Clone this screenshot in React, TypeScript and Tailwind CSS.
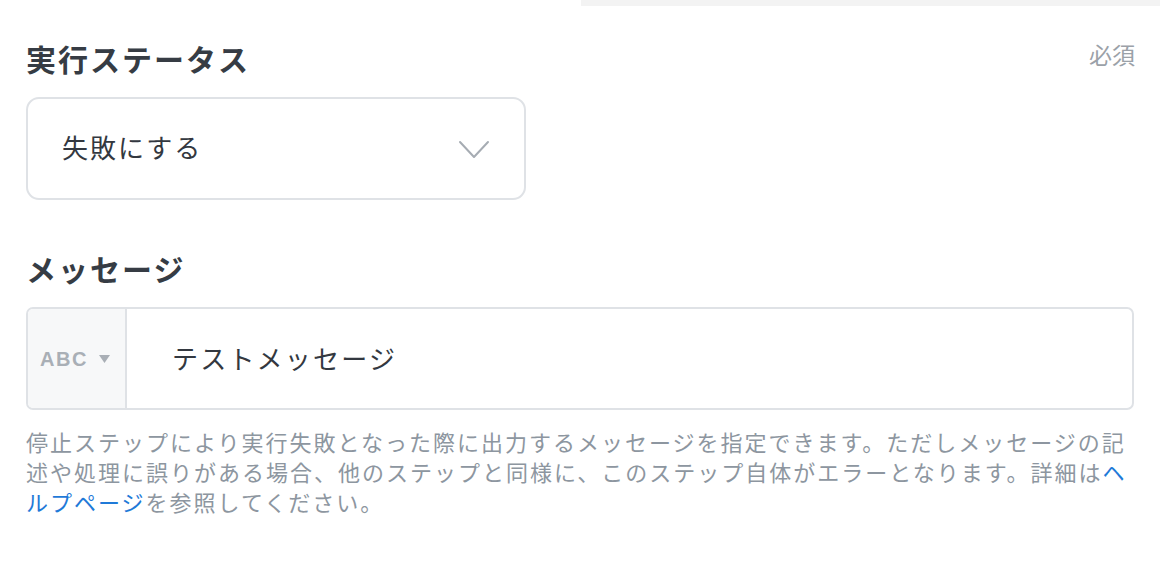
import React from 'react';

const jp = { fontFamily: '"Noto Sans CJK JP", "Noto Sans", sans-serif' };

const Chevron = () => (
    <svg width="32" height="20" viewBox="0 0 32 20" fill="none">
        <polyline points="2,3 16,18 30,3" stroke="#a6acb3" strokeWidth="2" strokeLinecap="round" strokeLinejoin="round" />
    </svg>
);

const Caret = () => (
    <svg width="11" height="8" viewBox="0 0 11 8">
        <polygon points="0,0 11,0 5.5,8" fill="#a9afb6" />
    </svg>
);

export default function App() {
    return (
        <div className="w-[1160px] h-[578px] bg-white overflow-hidden" style={jp}>
            {/* strip of the panel above */}
            <div className="flex justify-end">
                <div className="w-[579px] h-[6px] bg-[#f3f3f3]"></div>
            </div>

            <div className="px-[26px]">
                {/* 実行ステータス */}
                <div className="flex justify-between items-center mt-[32px] h-[40px]">
                    <h2 className="text-[30px] font-bold tracking-[2px] text-[#363c44] leading-[40px]">実行ステータス</h2>
                    <span className="text-[23px] text-[#9ba1a8] leading-[30px] mr-[-1px] -mt-[8px]">必須</span>
                </div>
                <div className="mt-[19px] w-[500px] h-[103px] border-2 border-[#dfe2e6] rounded-[13px] flex items-center justify-between pl-[34px] pr-[34px]">
                    <span className="text-[26px] tracking-[2px] text-[#333840] mb-[5px]">失敗にする</span>
                    <Chevron />
                </div>

                {/* メッセージ */}
                <h2 className="mt-[48px] text-[30px] font-bold tracking-[2px] text-[#363c44] leading-[40px]">メッセージ</h2>
                <div className="mt-[19px] h-[103px] border-2 border-[#dfe2e6] rounded-[7px] flex overflow-hidden">
                    <div className="w-[99px] bg-[#f7f8f9] border-r-2 border-[#dfe2e6] flex items-center gap-[11px] pl-[12px]">
                        <span className="text-[20px] font-bold tracking-[1.5px] text-[#a9afb6]" style={{ fontFamily: '"Liberation Sans", Arial, sans-serif' }}>ABC</span>
                        <Caret />
                    </div>
                    <div className="flex items-center pl-[45px]">
                        <span className="text-[26px] tracking-[2.2px] text-[#333840] mb-[3px]">テストメッセージ</span>
                    </div>
                </div>

                <p className="mt-[16px] text-[22px] leading-[30px] tracking-[2px] text-[#8d96a0]">
                    <span>停止ステップにより実行失敗となった際に出力するメッセージを指定できます。ただしメッセージの記述や処理に誤りがある場合、他のステップと同様に、このステップ自体がエラーとなります。詳細は</span>
                    <a className="text-[#1f7ad8]">ヘルプページ</a>
                    <span>を参照してください。</span>
                </p>
            </div>
        </div>
    );
}
